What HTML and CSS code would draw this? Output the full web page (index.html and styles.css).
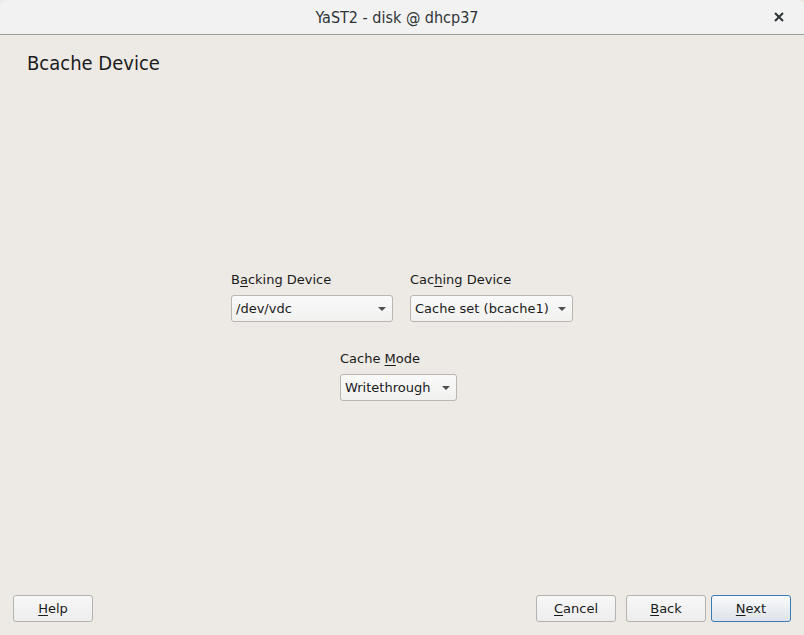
FILE: index.html
```html
<!DOCTYPE html>
<html>
<head>
<meta charset="utf-8">
<title>YaST2 - disk @ dhcp37</title>
<link rel="stylesheet" href="styles.css">
</head>
<body>
<div class="window">
  <header class="titlebar">
    <span class="title">YaST2 - disk @ dhcp37</span>
    <span class="close" aria-label="Close">
      <svg width="10" height="10" viewBox="0 0 10 10"><path d="M1 1 L9 9 M9 1 L1 9" stroke="#2e3436" stroke-width="2" fill="none"/></svg>
    </span>
  </header>
  <main class="content">
    <h1 class="heading">Bcache Device</h1>
    <div class="form-area">
      <div class="form">
        <div class="row">
          <div class="field">
            <label class="label">B<u>a</u>cking Device</label>
            <div class="combo combo-backing"><span>/dev/vdc</span><i class="arrow"></i></div>
          </div>
          <div class="field">
            <label class="label">Cac<u>h</u>ing Device</label>
            <div class="combo combo-caching"><span>Cache set (bcache1)</span><i class="arrow"></i></div>
          </div>
        </div>
        <div class="row row-center">
          <div class="field field-mode">
            <label class="label">Cache <u>M</u>ode</label>
            <div class="combo combo-mode"><span>Writethrough</span><i class="arrow"></i></div>
          </div>
        </div>
      </div>
    </div>
    <footer class="buttons">
      <button class="btn"><u>H</u>elp</button>
      <div class="spacer"></div>
      <button class="btn"><u>C</u>ancel</button>
      <button class="btn btn-back"><u>B</u>ack</button>
      <button class="btn btn-default"><u>N</u>ext</button>
    </footer>
  </main>
</div>
</body>
</html>
```

FILE: styles.css
```css
html, body {
  margin: 0;
  padding: 0;
  width: 804px;
  height: 635px;
  overflow: hidden;
  background: #edeae6;
}

.window {
  display: flex;
  flex-direction: column;
  width: 804px;
  height: 635px;
  font-family: "DejaVu Sans", sans-serif;
  color: #2e3436;
}

.titlebar {
  position: relative;
  height: 34px;
  flex: none;
  background: #f2f2f2;
  border-bottom: 1px solid #9c9e9b;
  border-radius: 6px 6px 0 0;
  display: flex;
  align-items: center;
  justify-content: center;
}

.title {
  font-family: "DejaVu Sans Condensed", "DejaVu Sans", sans-serif;
  font-stretch: condensed;
  font-size: 16px;
  color: #2e3436;
  margin-right: 10px;
}

.close {
  position: absolute;
  right: 20px;
  top: 12px;
  width: 10px;
  height: 10px;
  display: block;
}
.close svg { display: block; }

.content {
  flex: 1;
  display: flex;
  flex-direction: column;
  background: #edeae6;
}

.heading {
  margin: 15px 0 0 27px;
  font-family: "DejaVu Sans Condensed", "DejaVu Sans", sans-serif;
  font-stretch: condensed;
  font-weight: normal;
  font-size: 20px;
  line-height: 26px;
  color: #1c1c1c;
}

.form-area {
  flex: 1;
  display: flex;
  justify-content: center;
  align-items: flex-start;
  padding-top: 195px;
}

.form {
  display: flex;
  flex-direction: column;
  gap: 28px;
}

.row {
  display: flex;
  gap: 17px;
}

.row-center {
  justify-content: center;
}

.field {
  display: flex;
  flex-direction: column;
}

.field-mode {
  margin-right: 7px;
}

.label {
  font-size: 13px;
  line-height: 17px;
  color: #1a1a1a;
  margin-bottom: 7px;
  white-space: nowrap;
}

.label u, .btn u {
  text-decoration-thickness: 1px;
  text-underline-offset: 2px;
}

.combo {
  box-sizing: border-box;
  height: 27px;
  border: 1px solid #b9b6b1;
  border-radius: 3px;
  background: linear-gradient(#f9f9f9, #f1f1f0);
  display: flex;
  align-items: center;
  padding: 0 6px 0 4px;
  font-size: 13px;
  color: #1a1a1a;
  white-space: nowrap;
}

.combo span { flex: 1; }

.combo-backing { width: 162px; }
.combo-caching { width: 163px; }
.combo-mode { width: 117px; }

.arrow {
  width: 0;
  height: 0;
  border-left: 4px solid transparent;
  border-right: 4px solid transparent;
  border-top: 4px solid #4e4e4e;
  margin-left: 6px;
}

.buttons {
  flex: none;
  display: flex;
  align-items: center;
  padding: 0 13px 13px 13px;
  height: 27px;
}

.spacer { flex: 1; }

.btn {
  box-sizing: border-box;
  width: 80px;
  height: 27px;
  margin: 0;
  padding: 0;
  border: 1px solid #b5b3ae;
  border-radius: 3px;
  background: linear-gradient(#f7f7f7, #ededed);
  font-family: "DejaVu Sans", sans-serif;
  font-size: 13px;
  color: #1a1a1a;
  cursor: default;
}

.btn + .btn { margin-left: 10px; }
.btn.btn-default {
  margin-left: 5px;
  border-color: #3a7cb4;
  background: linear-gradient(#f9fafb, #dde3e9);
}
```
